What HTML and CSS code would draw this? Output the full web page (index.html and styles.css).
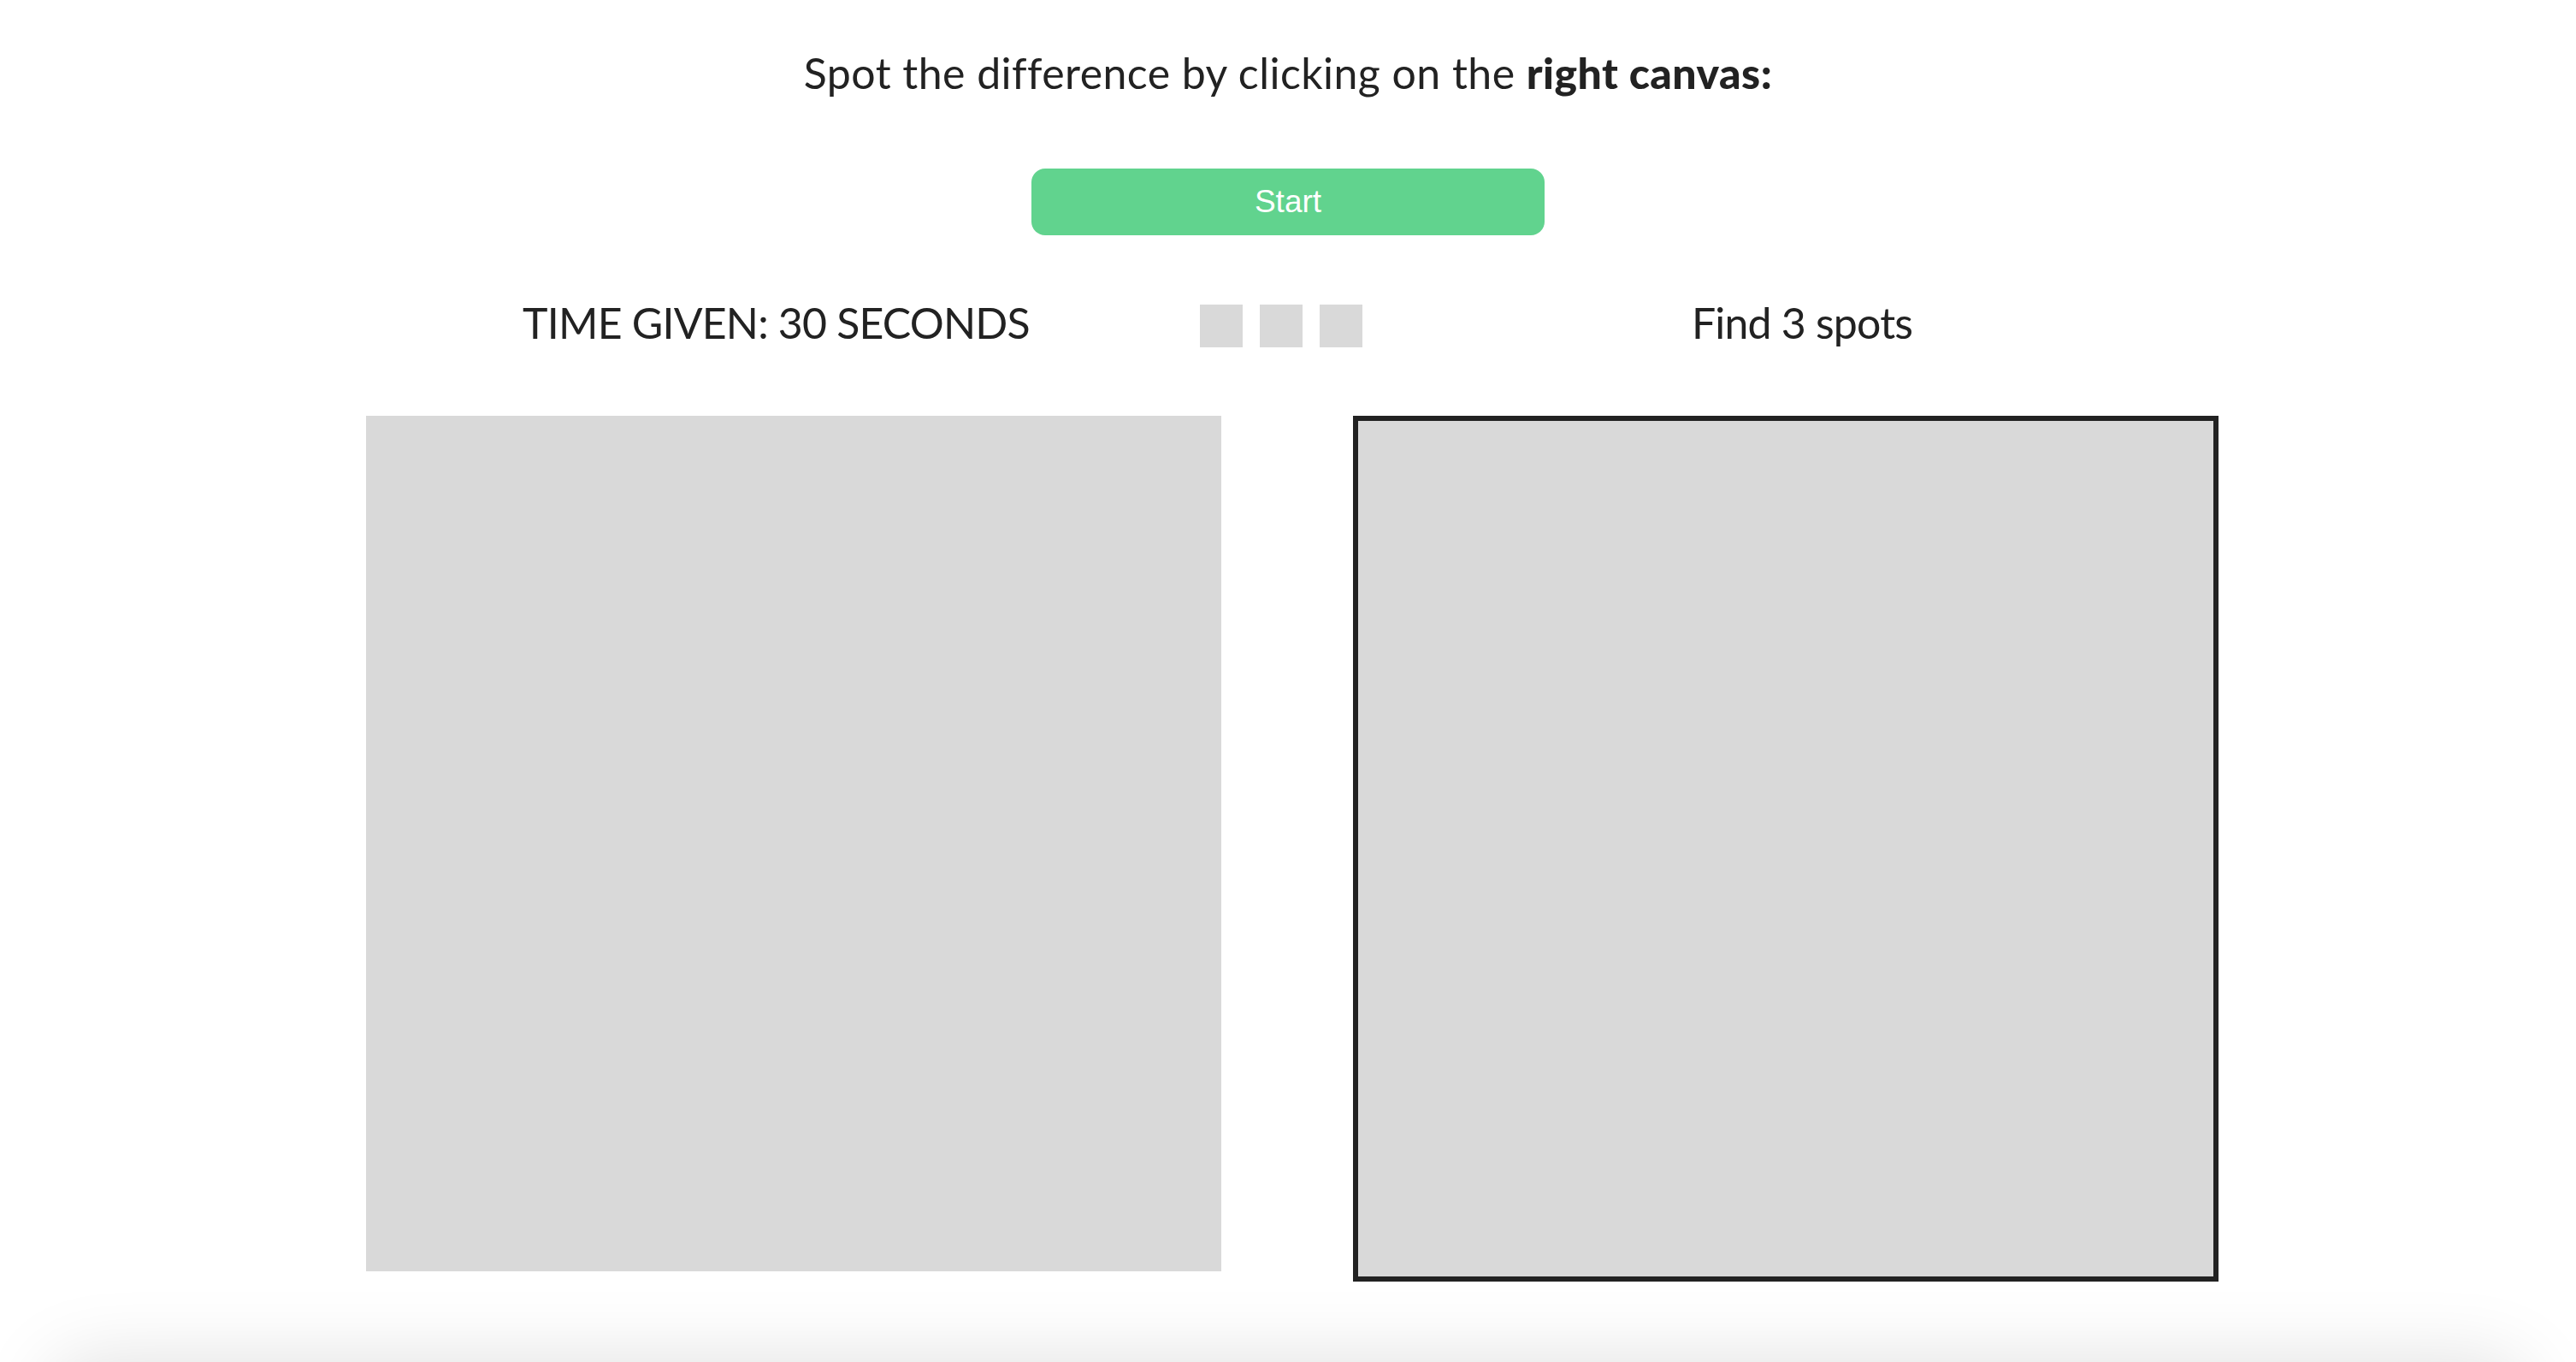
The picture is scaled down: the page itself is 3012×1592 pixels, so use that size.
FILE: index.html
```html
<!DOCTYPE html>
<html lang="en">
<head>
<meta charset="utf-8">
<title>Spot the difference</title>
<link rel="stylesheet" href="styles.css">
</head>
<body>
<main class="game">
  <h1 class="title">Spot the difference by clicking on the <strong>right canvas:</strong></h1>
  <button class="start" type="button">Start</button>
  <div class="status">
    <div class="status__time">TIME GIVEN: 30 SECONDS</div>
    <div class="status__spots">
      <span class="spot"></span>
      <span class="spot"></span>
      <span class="spot"></span>
    </div>
    <div class="status__find">Find 3 spots</div>
  </div>
  <div class="boards">
    <div class="board"></div>
    <div class="board board--target"></div>
  </div>
</main>
<div class="footer-shadow"></div>
</body>
</html>
```

FILE: styles.css
```css
html, body {
  margin: 0;
  padding: 0;
  background: #ffffff;
  overflow: hidden;
}

body {
  font-family: Lato, "Open Sans", sans-serif;
  color: #222222;
}

.game {
  display: flex;
  flex-direction: column;
  align-items: center;
  padding-top: 55px;
}

.title {
  margin: 0;
  font-size: 50px;
  line-height: 60px;
  font-weight: 400;
  letter-spacing: 0.45px;
  color: #222222;
}

.title strong {
  font-weight: 900;
}

.start {
  margin-top: 82px;
  width: 600px;
  height: 78px;
  border: none;
  border-radius: 16px;
  background: #61d38e;
  color: #ffffff;
  font-family: "Liberation Sans", Arial, sans-serif;
  font-size: 37px;
  cursor: pointer;
}

.status {
  margin-top: 72px;
  width: 2166px;
  margin-left: 10px;
  display: grid;
  grid-template-columns: 959px 190px 1fr;
  column-gap: 16px;
  align-items: start;
  font-size: 50px;
  line-height: 60px;
  letter-spacing: -0.8px;
}

.status__time {
  text-align: center;
}

.status__spots {
  display: flex;
  gap: 20px;
  margin-top: 9px;
}

.spot {
  width: 50px;
  height: 50px;
  background: #d9d9d9;
}

.status__find {
  text-align: center;
  padding-left: 11px;
}

.boards {
  margin-top: 79px;
  margin-left: 10px;
  display: flex;
  align-items: flex-start;
  gap: 154px;
}

.board {
  width: 1000px;
  height: 1000px;
  background: #d9d9d9;
}

.board--target {
  border: 6px solid #222222;
}

.footer-shadow {
  position: fixed;
  left: 60px;
  right: 60px;
  bottom: -120px;
  height: 120px;
  background: #ffffff;
  box-shadow: 0 0 90px rgba(0, 0, 0, 0.13);
  border-radius: 40px;
}
```
